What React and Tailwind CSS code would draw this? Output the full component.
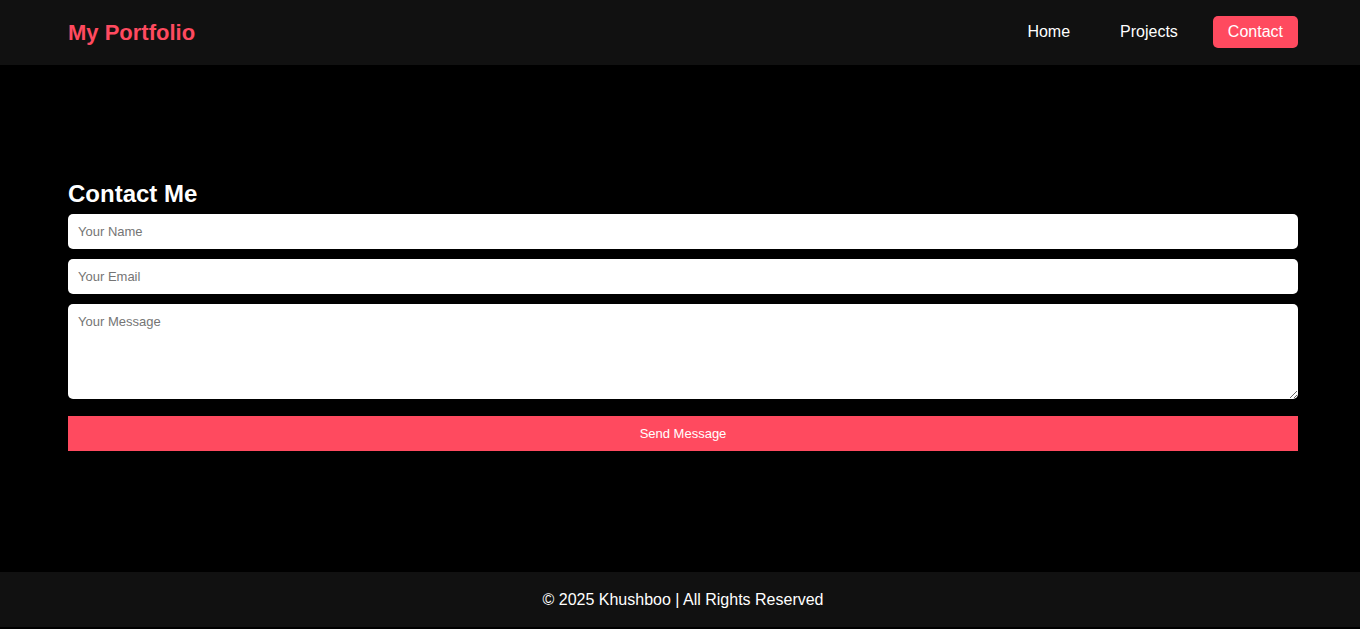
export default function App() {
  const font = { fontFamily: '"Liberation Sans", Arial, sans-serif' }
  return (
    <div className="min-h-screen bg-black text-white" style={font}>
      {/* Header */}
      <header className="h-[65px] bg-[#111111] flex items-center justify-between pl-[68px] pr-[62px]">
        <h1 className="text-[22px] font-bold text-[#ff4a5f]">My Portfolio</h1>
        <nav className="flex items-center gap-5 pb-[1px]">
          <a className="px-[15px] py-[7px] text-base leading-[18px] text-white rounded-[5px]">Home</a>
          <a className="px-[15px] py-[7px] text-base leading-[18px] text-white rounded-[5px]">Projects</a>
          <a className="px-[15px] py-[7px] text-base leading-[18px] text-white rounded-[5px] bg-[#ff4a5f]">Contact</a>
        </nav>
      </header>

      {/* Contact section */}
      <main className="h-[507px] flex flex-col justify-center pl-[68px] pr-[62px] pb-[6px]">
        <h2 className="text-2xl font-bold leading-7 mb-[6px]">Contact Me</h2>
        <form className="flex flex-col">
          <input
            type="text"
            placeholder="Your Name"
            className="h-[35px] px-[10px] rounded-[5px] bg-white text-black text-[13px] placeholder-[#757575] outline-none mb-[10px]"
          />
          <input
            type="email"
            placeholder="Your Email"
            className="h-[35px] px-[10px] rounded-[5px] bg-white text-black text-[13px] placeholder-[#757575] outline-none mb-[10px]"
          />
          <textarea
            placeholder="Your Message"
            className="h-[95px] px-[10px] py-[8px] rounded-[5px] bg-white text-black text-[13px] placeholder-[#757575] outline-none mb-[17px]"
          />
          <button type="button" className="h-[35px] bg-[#ff4a5f] text-white text-[13px]">
            Send Message
          </button>
        </form>
      </main>

      {/* Footer */}
      <footer className="h-[55px] bg-[#111111] flex items-center justify-center pl-[6px]">
        <p className="text-base">© 2025 Khushboo | All Rights Reserved</p>
      </footer>
    </div>
  )
}
